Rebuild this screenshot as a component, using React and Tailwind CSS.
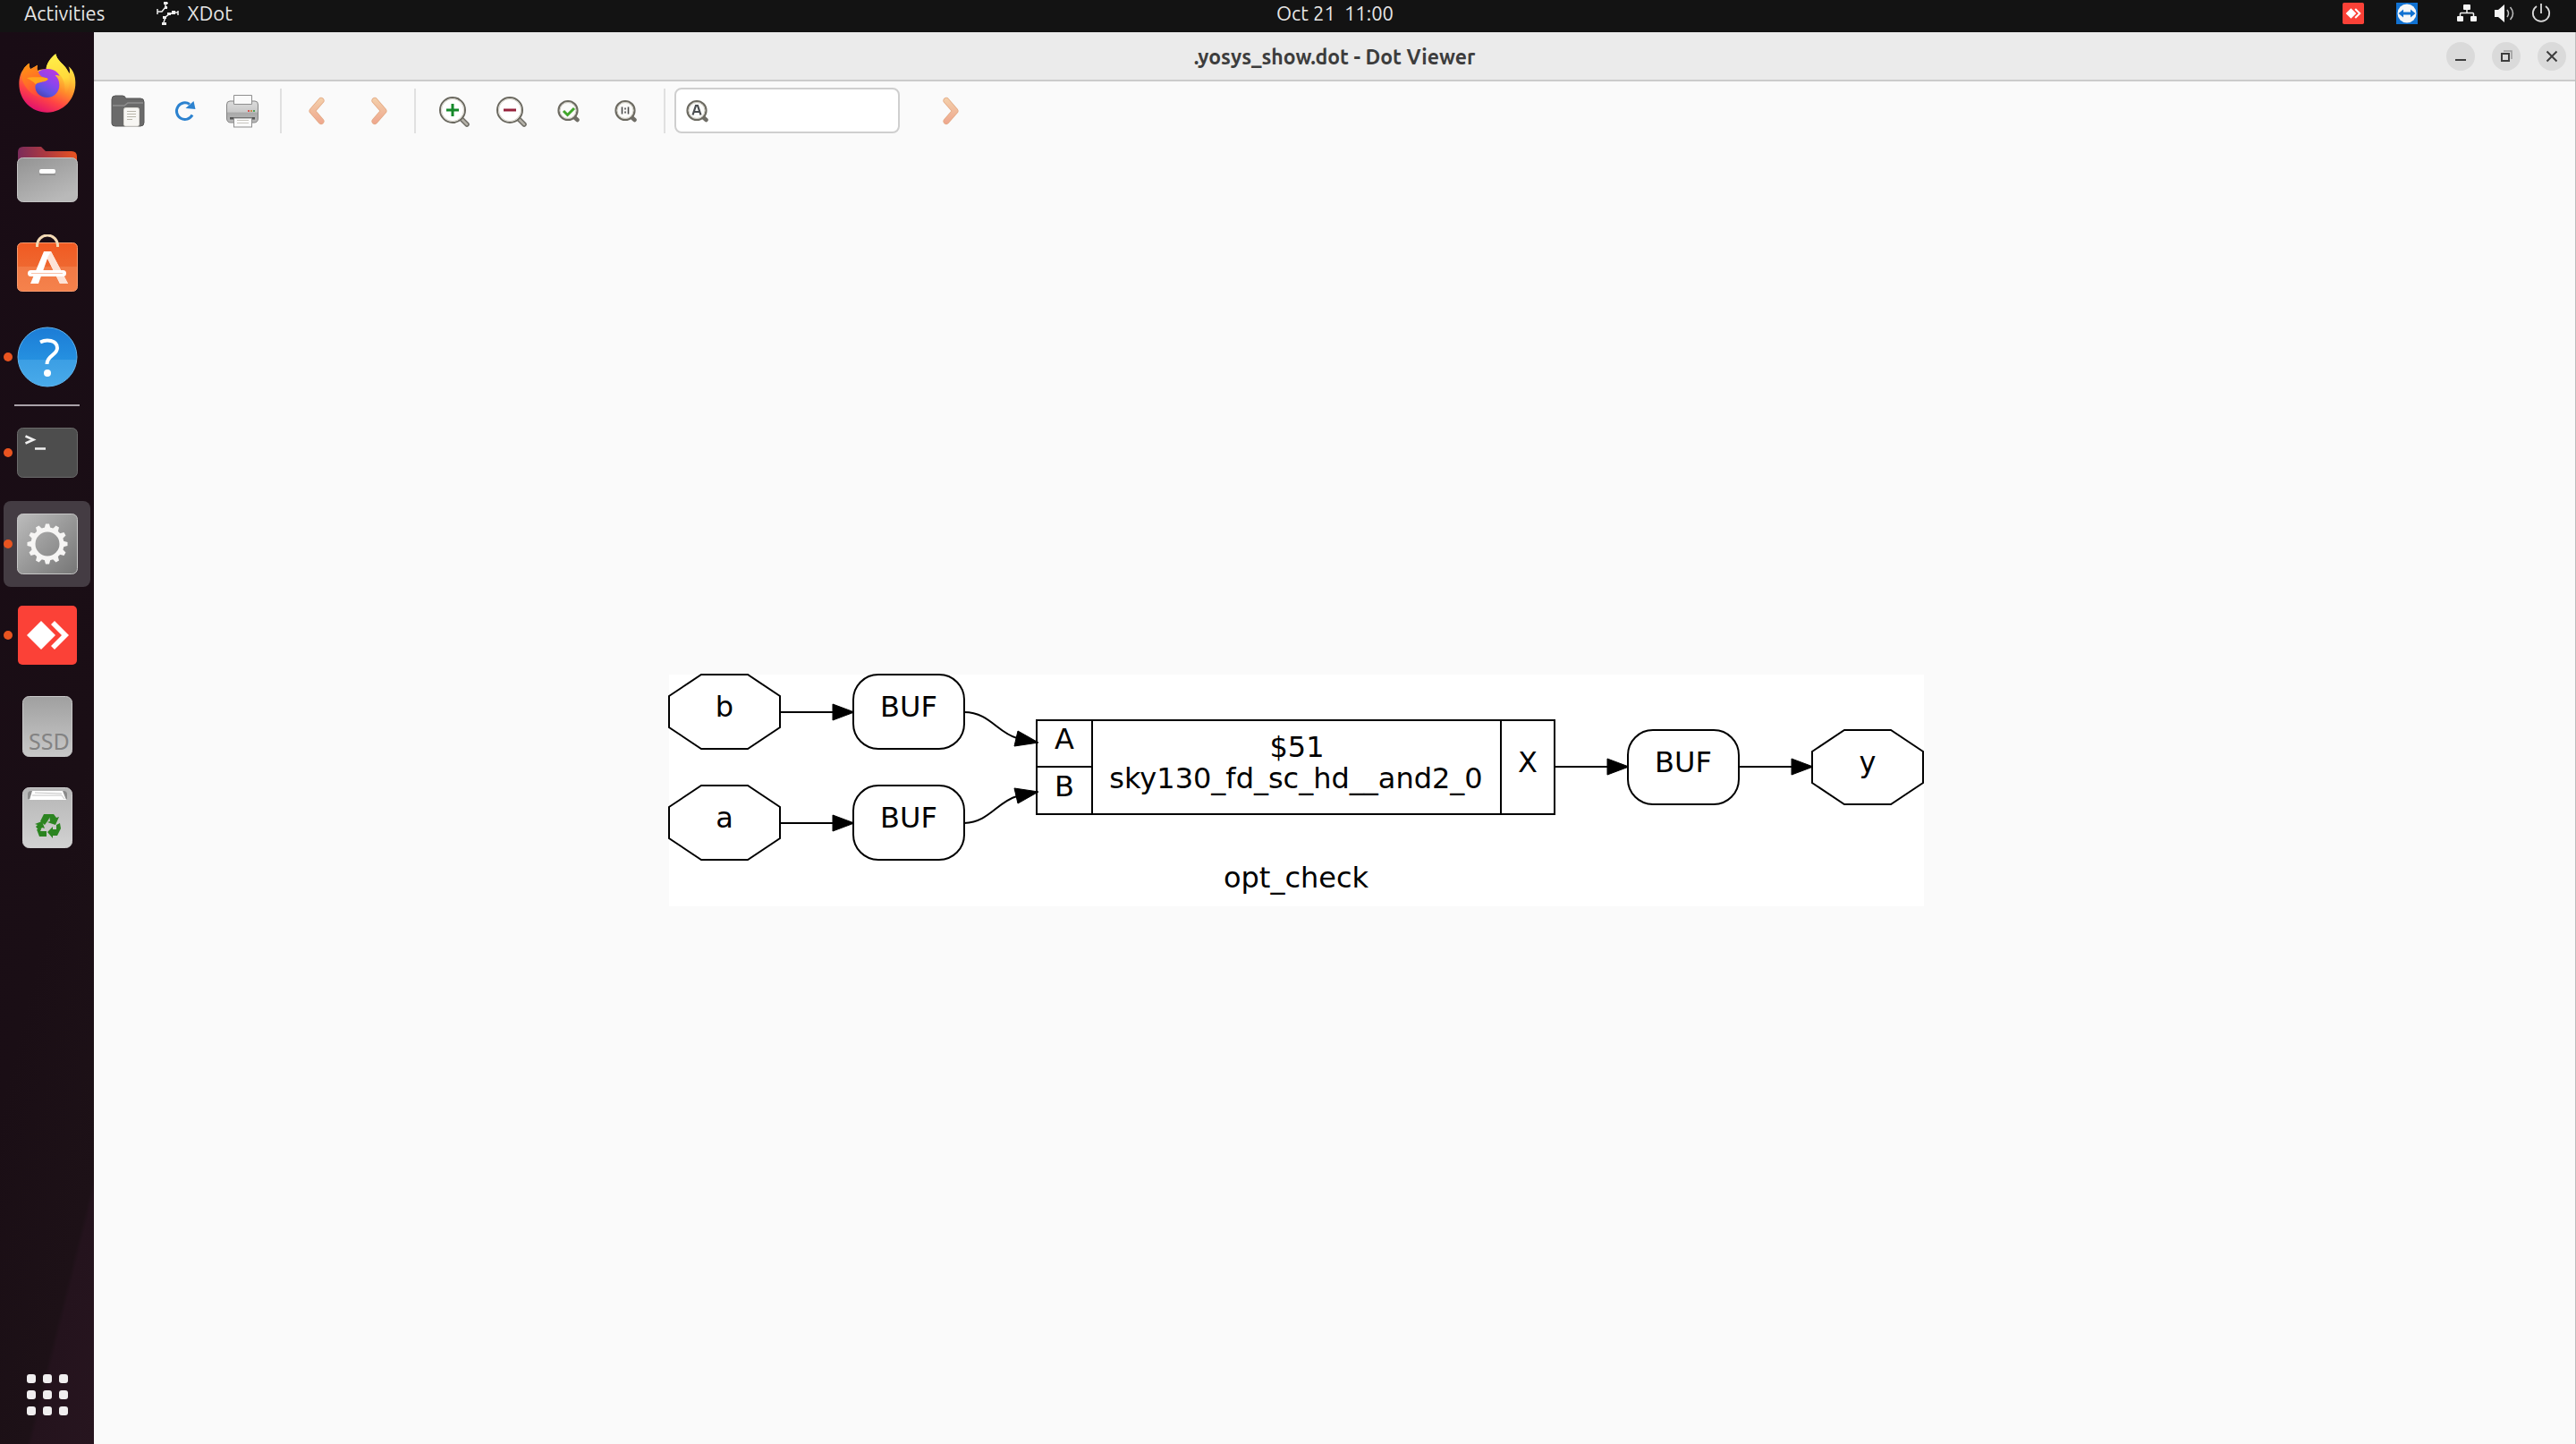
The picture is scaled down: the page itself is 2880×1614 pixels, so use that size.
import React from "react";

/* ---------- Dock icons ---------- */

function FirefoxIcon() {
  return (
    <svg className="h-[66px] w-[64px]" viewBox="62 179 192 198" aria-hidden="true">
      <defs>
        <linearGradient id="fxBody" x1="0.8" y1="0.05" x2="0.35" y2="1">
          <stop offset="0" stopColor="#fff44f" />
          <stop offset="0.3" stopColor="#ffc636" />
          <stop offset="0.52" stopColor="#ff8a2b" />
          <stop offset="0.74" stopColor="#ff4444" />
          <stop offset="1" stopColor="#e0106f" />
        </linearGradient>
        <linearGradient id="fxGlobe" x1="0.75" y1="0" x2="0.25" y2="1">
          <stop offset="0" stopColor="#b83be0" />
          <stop offset="0.45" stopColor="#8a45ee" />
          <stop offset="0.75" stopColor="#5a55e0" />
          <stop offset="1" stopColor="#4b3fae" />
        </linearGradient>
        <linearGradient id="fxHead" x1="0" y1="0" x2="0.4" y2="1">
          <stop offset="0" stopColor="#ff980e" />
          <stop offset="0.6" stopColor="#ff6f27" />
          <stop offset="1" stopColor="#ff4a3c" />
        </linearGradient>
        <linearGradient id="fxFlame" x1="0.4" y1="0" x2="0.5" y2="1">
          <stop offset="0" stopColor="#fff04a" />
          <stop offset="0.6" stopColor="#ffd93b" />
          <stop offset="1" stopColor="#ff9e2c" stopOpacity="0" />
        </linearGradient>
      </defs>
      <path
        d="M186 180C190 200 206 210 218 224C224 232 228 238 232 246C234 236 232 228 229 222C244 232 252 254 252 276C253 332 211 376 158 376C104 376 63 334 63 280C63 258 70 240 77 232C82 222 90 216 97 211C97 219 98 226 101 231C108 227 116 222 125 217C123 224 123 230 125 236C134 232 145 231 154 232C154 212 170 192 186 180Z"
        fill="url(#fxBody)"
      />
      <path
        d="M186 180C190 200 206 210 218 224C240 252 236 300 214 322C222 296 214 262 198 248C184 238 168 236 154 232C154 212 170 192 186 180Z"
        fill="url(#fxFlame)"
      />
      <path
        d="M128 240C140 230 162 228 176 233C188 237 196 246 199 254C190 250 186 250 184 252C194 260 198 272 198 284C198 308 180 326 157 326C134 326 116 308 116 286C116 266 120 250 128 240Z"
        fill="url(#fxGlobe)"
      />
      <path
        d="M77 232C82 222 90 216 97 211C97 219 98 226 101 231C108 227 116 222 125 217C123 224 123 230 125 236C130 246 134 254 142 258C150 260 158 260 160 264C156 272 146 272 138 274C128 276 118 278 117 290C116 306 124 318 138 324C110 322 84 300 72 262Z"
        fill="url(#fxHead)"
      />
      <path d="M89 261C100 256 122 258 142 258C150 260 158 260 160 264C156 272 146 272 138 274C130 276 122 276 118 282C112 272 100 268 89 261Z" fill="#ffa61c" />
    </svg>
  );
}

function FilesIcon() {
  return (
    <svg className="h-[62px] w-[68px]" viewBox="0 0 68 62" aria-hidden="true">
      <defs>
        <linearGradient id="flBack" x1="0" y1="0" x2="1" y2="0">
          <stop offset="0" stopColor="#7a2b5a" />
          <stop offset="0.5" stopColor="#b03a3e" />
          <stop offset="1" stopColor="#e95420" />
        </linearGradient>
        <linearGradient id="flFront" x1="0" y1="0" x2="0.6" y2="1">
          <stop offset="0" stopColor="#939393" />
          <stop offset="1" stopColor="#b9b9b9" />
        </linearGradient>
      </defs>
      <path d="M1 30V6Q1 0 7 0H27L32 5H61Q67 5 67 11V30Z" fill="url(#flBack)" />
      <rect x="0.5" y="12.500" width="67" height="49" rx="6" fill="url(#flFront)" stroke="#c4c4c4" />
      <rect x="25" y="25" width="18" height="5" rx="2" fill="#fff" />
      <path d="M25 31H43" stroke="#7d7d7d" strokeWidth="1" />
    </svg>
  );
}

function SoftwareIcon() {
  return (
    <svg className="h-[70px] w-[68px]" viewBox="0 0 68 70" aria-hidden="true">
      <defs>
        <linearGradient id="swBag" x1="0" y1="0" x2="0" y2="1">
          <stop offset="0" stopColor="#f15a22" />
          <stop offset="0.5" stopColor="#ef6830" />
          <stop offset="0.5" stopColor="#f27a45" />
          <stop offset="1" stopColor="#f5824c" />
        </linearGradient>
      </defs>
      <rect x="0.5" y="9.500" width="67" height="54" rx="5" fill="url(#swBag)" stroke="#f79a6e" />
      <path d="M22.500 14V12.500A11.500 11.500 0 0 1 45.500 12.500V14" fill="none" stroke="#f3d9b4" strokeWidth="3" />
      <path d="M30 19H38L57 55H48L34 27L24 55H15Z" fill="#fff" />
      <path d="M34 26L38 19L57 55H48Z" fill="#fde3d6" />
      <rect x="12" y="40" width="43" height="7" rx="3.500" fill="#fff" />
      <path d="M16 43.500H51" stroke="#f9c2a8" strokeWidth="1" />
    </svg>
  );
}

function HelpIcon() {
  return (
    <svg className="h-[68px] w-[68px]" viewBox="0 0 68 68" aria-hidden="true">
      <defs>
        <linearGradient id="hpDisc" x1="0" y1="0" x2="0" y2="1">
          <stop offset="0" stopColor="#1c7cd6" />
          <stop offset="0.54" stopColor="#2590e0" />
          <stop offset="0.54" stopColor="#3b9ee4" />
          <stop offset="1" stopColor="#49abea" />
        </linearGradient>
      </defs>
      <circle cx="34" cy="34" r="33" fill="url(#hpDisc)" stroke="#5fb4ee" strokeWidth="1" />
      <path d="M26 17.500C33 14 45 15 45 24C45 32 33.500 32 33.500 42" fill="none" stroke="#fff" strokeWidth="4" />
      <circle cx="34" cy="52" r="4" fill="#fff" />
    </svg>
  );
}

function TerminalIcon() {
  return (
    <svg className="h-[56px] w-[68px]" viewBox="0 0 68 56" aria-hidden="true">
      <rect x="0.5" y="0.500" width="67" height="55" rx="6" fill="#4d4d4d" stroke="#6b6b6b" />
      <path d="M9.500 9.500L18.500 13.500L9.500 17.500" fill="none" stroke="#f0f0f0" strokeWidth="2.500" />
      <path d="M20 23.500H32" stroke="#f0f0f0" strokeWidth="2.500" />
    </svg>
  );
}

const GEAR_TEETH = [0, 30, 60, 90, 120, 150, 180, 210, 240, 270, 300, 330];

function SettingsIcon() {
  return (
    <svg className="h-[68px] w-[68px]" viewBox="0 0 68 68" aria-hidden="true">
      <defs>
        <linearGradient id="stTile" x1="0" y1="0" x2="1" y2="1">
          <stop offset="0" stopColor="#bcbcbc" />
          <stop offset="1" stopColor="#757575" />
        </linearGradient>
      </defs>
      <rect x="0.5" y="0.500" width="67" height="67" rx="6" fill="url(#stTile)" stroke="#c6c6c6" />
      <circle cx="34" cy="34" r="16" fill="none" stroke="#f6f5f4" strokeWidth="5" />
      {GEAR_TEETH.map((a) => (
        <path key={a} d="M30.500 17L32 11.500H36L37.500 17Z" fill="#f6f5f4" transform={`rotate(${a} 34 34)`} />
      ))}
    </svg>
  );
}

function AnyDeskIcon({ className }) {
  return (
    <svg className={className} viewBox="0 0 66 66" aria-hidden="true">
      <rect width="66" height="66" rx="5" fill="#fb4137" />
      <path d="M10 33L26 17L42 33L26 49Z" fill="#fff" />
      <path d="M37 21L41 17L57 33L41 49L37 45L49 33Z" fill="#fff" />
    </svg>
  );
}

function SsdIcon() {
  return (
    <svg className="h-[68px] w-[56px]" viewBox="0 0 56 68" aria-hidden="true">
      <defs>
        <linearGradient id="sdTile" x1="0" y1="0" x2="0" y2="1">
          <stop offset="0" stopColor="#a0a0a0" />
          <stop offset="1" stopColor="#c8c8c8" />
        </linearGradient>
      </defs>
      <rect x="0.5" y="0.500" width="55" height="67" rx="7" fill="url(#sdTile)" stroke="#c9c9c9" />
      <text x="7" y="60" fontSize="25" fill="#838383" className="font-['Noto_Sans',sans-serif]">
        SSD
      </text>
    </svg>
  );
}

function TrashIcon() {
  return (
    <svg className="h-[68px] w-[56px]" viewBox="0 0 56 68" aria-hidden="true">
      <defs>
        <linearGradient id="trTile" x1="0" y1="0" x2="0" y2="1">
          <stop offset="0" stopColor="#b5b5b5" />
          <stop offset="1" stopColor="#d2d2d2" />
        </linearGradient>
      </defs>
      <rect x="0.5" y="0.500" width="55" height="67" rx="7" fill="url(#trTile)" stroke="#d0d0d0" />
      <path d="M6 13V8Q6 4 10 4H46Q50 4 50 8V13Z" fill="#8a8a8a" />
      <path d="M8 14L11 4H45L49 14Z" fill="#fff" />
      <path d="M11 9H44L47 13M14 6L44 7" fill="none" stroke="#c4c4c4" strokeWidth="1" />
      <g fill="#2b8420">
        <path d="M20 38L24 30H33L28 38L25 42Z" />
        <path d="M30 30H35L38 34L41 33L37 42L28 39L31 38Z" />
        <path d="M38 42L42 40L43 46L39 54H34V57L28 50L34 44V47H38Z" />
        <path d="M16 47L21 47L20 49H27V55H19Z" />
        <path d="M14 41L22 38L25 46L22 45L19 49L15 44L17 42Z" />
      </g>
    </svg>
  );
}

/* ---------- Tray icons ---------- */

function XDotIcon() {
  return (
    <svg className="h-[26px] w-[26px]" viewBox="0 0 26 26" aria-hidden="true">
      <g fill="none" stroke="#ededed" strokeWidth="1.500">
        <path d="M1 11H6L10 6V2M8 1.500H13M1 8V14" />
        <path d="M8 23L10 17L14 14L19 12H24M24 10V15M6 24H11M10 6L12 7" />
      </g>
      <g fill="#ededed">
        <rect x="8" y="0" width="4" height="3" />
        <rect x="6" y="23" width="5" height="3" />
        <rect x="7" y="16" width="4" height="3" />
        <rect x="12" y="12" width="4" height="3" />
        <rect x="17" y="10" width="4" height="4" />
        <rect x="9" y="5" width="3" height="3" />
      </g>
    </svg>
  );
}

function TeamViewerIcon() {
  return (
    <svg className="h-[24px] w-[24px]" viewBox="0 0 24 24" aria-hidden="true">
      <rect width="24" height="24" fill="#1172d2" />
      <circle cx="12" cy="12" r="10.500" fill="#f4f6f8" />
      <path d="M2.500 12L8 7.500V10.500H16V7.500L21.500 12L16 16.500V13.500H8V16.500Z" fill="#1172d2" />
    </svg>
  );
}

function NetworkIcon() {
  return (
    <svg className="h-[22px] w-[24px]" viewBox="0 0 24 22" aria-hidden="true">
      <path d="M12 6V11M4.500 15V11.500Q4.500 10.500 5.500 10.500H18.500Q19.500 10.500 19.500 11.500V15" fill="none" stroke="#f0f0f0" strokeWidth="1.500" />
      <rect x="8" y="1" width="8" height="6" rx="1" fill="#f6f6f6" />
      <rect x="1" y="14" width="7" height="6" rx="1" fill="#f6f6f6" />
      <rect x="16" y="14" width="7" height="6" rx="1" fill="#f6f6f6" />
    </svg>
  );
}

function VolumeIcon() {
  return (
    <svg className="h-[22px] w-[22px]" viewBox="0 0 22 22" aria-hidden="true">
      <path d="M0 7H4L11 1V21L4 15H0Z" fill="#f6f6f6" />
      <path d="M14 7Q17 11 14 15M17.500 4Q23.500 11 17.500 18" fill="none" stroke="#bdbdbd" strokeWidth="1.500" />
    </svg>
  );
}

function PowerIcon() {
  return (
    <svg className="h-[22px] w-[22px]" viewBox="0 0 22 22" aria-hidden="true">
      <path d="M6 3A9.200 9.200 0 1 0 16 3M11 0V11" fill="none" stroke="#dadada" strokeWidth="1.800" />
    </svg>
  );
}

/* ---------- Toolbar icons ---------- */

function OpenIcon() {
  return (
    <svg className="h-[36px] w-[38px]" viewBox="0 0 38 36" aria-hidden="true">
      <path d="M1 32V5Q1 1 5 1H13Q16 1 16.500 4H33Q37 4 37 8V31Q37 35 33 35H5Q1 35 1 32Z" fill="#6a6a6a" stroke="#575757" />
      <path d="M2 12H15L19 9H36" fill="none" stroke="#8f8f8f" strokeWidth="1.500" />
      <rect x="14.500" y="14.500" width="17" height="20.500" rx="2" fill="#f7f6f3" stroke="#d8d6d0" />
      <path d="M18 18.500H28M18 21.500H28M18 24.500H28M18 27.500H24" stroke="#b9b6aa" strokeWidth="1.200" />
    </svg>
  );
}

function ReloadIcon() {
  return (
    <svg className="h-[24px] w-[24px]" viewBox="0 0 24 24" aria-hidden="true">
      <path d="M20 16.500A9.300 9.300 0 1 1 17 4.500" fill="none" stroke="#2c82cf" strokeWidth="3" />
      <path d="M21.500 1L23.500 10L12.500 9Z" fill="#2c82cf" />
    </svg>
  );
}

function PrintIcon() {
  return (
    <svg className="h-[38px] w-[38px]" viewBox="0 0 38 38" aria-hidden="true">
      <defs>
        <linearGradient id="prBody" x1="0" y1="0" x2="0" y2="1">
          <stop offset="0" stopColor="#dcdcdc" />
          <stop offset="0.5" stopColor="#c9c9c9" />
          <stop offset="0.55" stopColor="#a9a9a9" />
          <stop offset="1" stopColor="#bababa" />
        </linearGradient>
      </defs>
      <path d="M5 8H33Q36.500 8 36.500 12V27Q36.500 32 32 32H6Q1.500 32 1.500 27V12Q1.500 8 5 8Z" fill="url(#prBody)" stroke="#858585" />
      <path d="M9.500 11.500V1.500H29.500V11.500Z" fill="#fafafa" stroke="#8f8f8f" />
      <rect x="5" y="26" width="28" height="2.500" fill="#555" />
      <rect x="9.500" y="27" width="20" height="10" fill="#fafafa" stroke="#8f8f8f" />
      <path d="M13 29.500H26M13 32.500H26" stroke="#c9c7c0" strokeWidth="1.200" />
      <rect x="25" y="18" width="2" height="2" fill="#d8544f" />
      <rect x="28" y="18" width="2" height="2" fill="#c88a4e" />
      <rect x="31" y="18" width="2" height="2" fill="#4fa45a" />
    </svg>
  );
}

function Chevron({ id, left = false }) {
  return (
    <svg className="h-[32px] w-[18px]" viewBox="0 0 18 32" aria-hidden="true">
      <defs>
        <linearGradient id={id} gradientUnits="userSpaceOnUse" x1="0" y1="0" x2="0" y2="32">
          <stop offset="0" stopColor="#f4d2ac" />
          <stop offset="1" stopColor="#eea48c" />
        </linearGradient>
      </defs>
      <g fill="none" strokeLinecap="round" strokeLinejoin="round">
        <path d={left ? "M14 4.500L4 16L14 27.500" : "M4 4.500L14 16L4 27.500"} stroke="#e3a983" strokeWidth="7" />
        <path d={left ? "M14 4.500L4 16L14 27.500" : "M4 4.500L14 16L4 27.500"} stroke={`url(#${id})`} strokeWidth="5.500" />
      </g>
    </svg>
  );
}

function Magnifier({ children }) {
  return (
    <svg className="h-[36px] w-[36px]" viewBox="0 0 36 36" aria-hidden="true">
      <path d="M25 26L32 33" stroke="#6f6d66" strokeWidth="5.500" strokeLinecap="round" />
      <path d="M26 27L32 33" stroke="#b4b1a8" strokeWidth="2.500" strokeLinecap="round" />
      <circle cx="16" cy="17" r="14" fill="#fff" stroke="#6a685f" strokeWidth="2" />
      <circle cx="16" cy="17" r="12.500" fill="none" stroke="#d5d2c8" strokeWidth="1" />
      {children}
    </svg>
  );
}

function SmallMagnifier({ children }) {
  return (
    <svg className="h-[26px] w-[26px] shrink-0" viewBox="0 0 26 26" aria-hidden="true">
      <path d="M18.500 19.500L22.500 23" stroke="#6f6d66" strokeWidth="4.500" strokeLinecap="round" />
      <circle cx="12" cy="12.500" r="10.500" fill="#fbfbf9" stroke="#6c6a61" strokeWidth="2.200" />
      <circle cx="12" cy="12.500" r="9" fill="none" stroke="#c9c6bc" strokeWidth="1" />
      {children}
    </svg>
  );
}

function ToolButton({ label, wide = false, children }) {
  return (
    <button type="button" aria-label={label} className={`flex h-[50px] shrink-0 items-center justify-center ${wide ? "w-[70px]" : "w-[64px]"}`}>
      {children}
    </button>
  );
}

function WindowButton({ label, children }) {
  return (
    <button type="button" aria-label={label} className="flex size-8 items-center justify-center rounded-full bg-[#dadada]">
      <svg className="size-4" viewBox="0 0 16 16" fill="none" stroke="#3d3d3d" strokeWidth="2" aria-hidden="true">
        {children}
      </svg>
    </button>
  );
}

function DockItem({ label, running = false, active = false, children }) {
  return (
    <button type="button" aria-label={label} className="relative flex h-[102px] w-full shrink-0 items-center justify-center">
      {active && <span className="absolute inset-x-1 inset-y-[3px] rounded-lg bg-[#443c43]" />}
      {running && <span className="absolute left-1 size-[10px] rounded-full bg-[#e95420]" />}
      <span className="relative">{children}</span>
    </button>
  );
}

/* ---------- Graph ---------- */

function Octagon({ x, y, label }) {
  return (
    <g>
      <path
        d={`M${x} ${y + 24}L${x + 36} ${y}H${x + 88}L${x + 124} ${y + 24}V${y + 59}L${x + 88} ${y + 83}H${x + 36}L${x} ${y + 59}Z`}
        fill="none"
        stroke="#000"
        strokeWidth="2"
      />
      <text x={x + 62} y={y + 47} textAnchor="middle">{label}</text>
    </g>
  );
}

function Buffer({ x, y }) {
  return (
    <g>
      <rect x={x} y={y} width="124" height="83" rx="28" ry="28" fill="none" stroke="#000" strokeWidth="2" />
      <text x={x + 62} y={y + 47} textAnchor="middle">BUF</text>
    </g>
  );
}

function Arrow({ x1, x2, y }) {
  return (
    <g>
      <path d={`M${x1} ${y}H${x2}`} stroke="#000" strokeWidth="2" />
      <path d={`M${x2 - 23} ${y - 9}L${x2 + 1} ${y}L${x2 - 23} ${y + 9}Z`} stroke="#000" strokeWidth="1" />
    </g>
  );
}

function Graph() {
  return (
    <svg
      className="h-[262px] w-[1406px] shrink-0 font-['DejaVu_Sans',sans-serif] text-[32px]"
      viewBox="0 0 1406 262"
      role="img"
      aria-label="opt_check"
    >
      <rect x="1" y="1" width="1403" height="259" fill="#fff" />
      <Octagon x={1} y={1} label="b" />
      <Octagon x={1} y={125} label="a" />
      <Arrow x1={125} x2={207} y={43} />
      <Arrow x1={125} x2={207} y={167} />
      <Buffer x={207} y={1} />
      <Buffer x={207} y={125} />
      <g fill="none" stroke="#000" strokeWidth="2">
        <path d="M331 43C359 43 368 66 390 72" />
        <path d="M331 167C359 166 368 143 390 137" />
        <path d="M412 52H991V157H412ZM412 104H474M474 52V157M931 52V157" />
      </g>
      <path d="M391 64L414 77L387 81Z" stroke="#000" />
      <path d="M387 128L414 132L391 145Z" stroke="#000" />
      <text x="443" y="84" textAnchor="middle">A</text>
      <text x="443" y="137" textAnchor="middle">B</text>
      <text x="703" y="93" textAnchor="middle">$51</text>
      <text x="702" y="128" textAnchor="middle">sky130_fd_sc_hd__and2_0</text>
      <text x="961" y="110" textAnchor="middle">X</text>
      <Arrow x1={991} x2={1073} y={104} />
      <Buffer x={1073} y={63} />
      <Arrow x1={1197} x2={1279} y={104} />
      <Octagon x={1279} y={63} label="y" />
      <text x="702" y="239" textAnchor="middle">opt_check</text>
    </svg>
  );
}

/* ---------- Shell ---------- */

function TopBar() {
  return (
    <header className="grid h-9 shrink-0 grid-cols-[105px_1fr_auto_1fr] items-center bg-[#131313] pb-[6px] text-[22px] leading-7 text-[#e6e6e6]">
      <div className="col-span-2 flex items-center pl-[27px]">
        <button type="button">Activities</button>
        <button type="button" className="ml-[58px] flex items-center gap-2">
          <XDotIcon />
          XDot
        </button>
      </div>
      <button type="button" className="whitespace-pre">Oct 21  11:00</button>
      <div className="flex items-center justify-end pr-7">
        <AnyDeskIcon className="mr-9 size-6" />
        <span className="mr-[43px]"><TeamViewerIcon /></span>
        <div className="flex items-center gap-[19px]">
          <NetworkIcon />
          <VolumeIcon />
          <PowerIcon />
        </div>
      </div>
    </header>
  );
}

function Dock() {
  return (
    <nav
      aria-label="Dock"
      className="flex w-[105px] shrink-0 flex-col bg-[linear-gradient(104deg,#190c15_0%,#1a0e15_60%,#1d1117_85%,#24131d_86%,#27151f_100%)] pt-[6px]"
    >
      <DockItem label="Firefox"><FirefoxIcon /></DockItem>
      <DockItem label="Files"><FilesIcon /></DockItem>
      <DockItem label="Ubuntu Software"><SoftwareIcon /></DockItem>
      <DockItem label="Help" running><HelpIcon /></DockItem>
      <hr className="mx-4 mt-[2px] mb-px h-[2px] border-0 bg-[#a9a1a8]" />
      <DockItem label="Terminal" running><TerminalIcon /></DockItem>
      <DockItem label="XDot" running active><SettingsIcon /></DockItem>
      <DockItem label="AnyDesk" running><AnyDeskIcon className="size-[66px]" /></DockItem>
      <DockItem label="SSD"><SsdIcon /></DockItem>
      <DockItem label="Trash"><TrashIcon /></DockItem>
      <button type="button" aria-label="Show Applications" className="mt-auto mb-8 grid grid-cols-3 gap-2 self-center">
        {Array.from({ length: 9 }, (_, i) => (
          <span key={i} className="size-[10px] rounded-[3px] bg-[#f0eeef]" />
        ))}
      </button>
    </nav>
  );
}

function Separator({ className }) {
  return <span className={`h-[50px] w-[2px] shrink-0 bg-[#e0e0e0] ${className}`} />;
}

function Toolbar() {
  return (
    <div role="toolbar" aria-label="Graph tools" className="flex shrink-0 items-center py-[7px] pl-[6px]">
      <ToolButton label="Open"><OpenIcon /></ToolButton>
      <ToolButton label="Reload"><ReloadIcon /></ToolButton>
      <ToolButton label="Print"><PrintIcon /></ToolButton>
      <Separator className="mr-1 ml-[10px]" />
      <ToolButton label="Back" wide><Chevron id="chBack" left /></ToolButton>
      <ToolButton label="Forward" wide><Chevron id="chForward" /></ToolButton>
      <Separator className="mr-[11px] ml-1" />
      <ToolButton label="Zoom in">
        <Magnifier><path d="M9 17H23M16 10V24" stroke="#15892a" strokeWidth="3" /></Magnifier>
      </ToolButton>
      <ToolButton label="Zoom out">
        <Magnifier><path d="M9 17H23" stroke="#97223c" strokeWidth="3" /></Magnifier>
      </ToolButton>
      <ToolButton label="Zoom to fit">
        <SmallMagnifier><path d="M7 13L11.500 17.500L19 10" fill="none" stroke="#41a62a" strokeWidth="3" /></SmallMagnifier>
      </ToolButton>
      <ToolButton label="Zoom 1:1">
        <SmallMagnifier>
          <path d="M8.500 8.500V16.500M15.500 8.500V16.500" stroke="#4a4a4a" strokeWidth="1.600" />
          <path d="M12 9.500V11.500M12 13.500V15.500" stroke="#4a4a4a" strokeWidth="1.600" />
        </SmallMagnifier>
      </ToolButton>
      <Separator className="mx-[10px]" />
      <div className="flex h-[51px] w-[252px] items-center rounded-lg border-2 border-[#cfcfcf] bg-white pl-[11px]">
        <SmallMagnifier>
          <path d="M7.500 17.500L11 7H13L16.500 17.500M9 14H15" fill="none" stroke="#4a4d50" strokeWidth="2.200" />
        </SmallMagnifier>
        <input type="text" aria-label="Find" className="ml-2 w-full min-w-0 bg-transparent text-[22px] outline-none" />
      </div>
      <span className="ml-[22px]">
        <ToolButton label="Find next" wide><Chevron id="chNext" /></ToolButton>
      </span>
    </div>
  );
}

export default function App() {
  return (
    <div className="flex h-screen flex-col bg-[#fafafa] font-[Ubuntu,'Noto_Sans',sans-serif]">
      <TopBar />
      <div className="flex min-h-0 flex-1">
        <Dock />
        <main className="flex min-w-0 flex-1 flex-col border-r border-[#bdbdbd]">
          <div className="grid h-[55px] shrink-0 grid-cols-[1fr_auto_1fr] items-center border-b-2 border-[#cbcbcb] bg-[#ebebeb]">
            <h1 className="col-start-2 pt-1 text-[23px] font-bold text-[#3d3d3d]">.yosys_show.dot - Dot Viewer</h1>
            <div className="flex justify-end gap-[19px] pr-[10px]">
              <WindowButton label="Minimize"><path d="M2 12H14" /></WindowButton>
              <WindowButton label="Restore">
                <path d="M3 5H11V13H3Z" />
                <path d="M5 2H14V11" stroke="#9a9a9a" strokeWidth="1.500" />
              </WindowButton>
              <WindowButton label="Close"><path d="M2.500 2.500L13.500 13.500M13.500 2.500L2.500 13.500" /></WindowButton>
            </div>
          </div>
          <Toolbar />
          <div className="flex flex-1 items-center justify-center pr-[84px] pb-[2px]">
            <Graph />
          </div>
        </main>
      </div>
    </div>
  );
}
